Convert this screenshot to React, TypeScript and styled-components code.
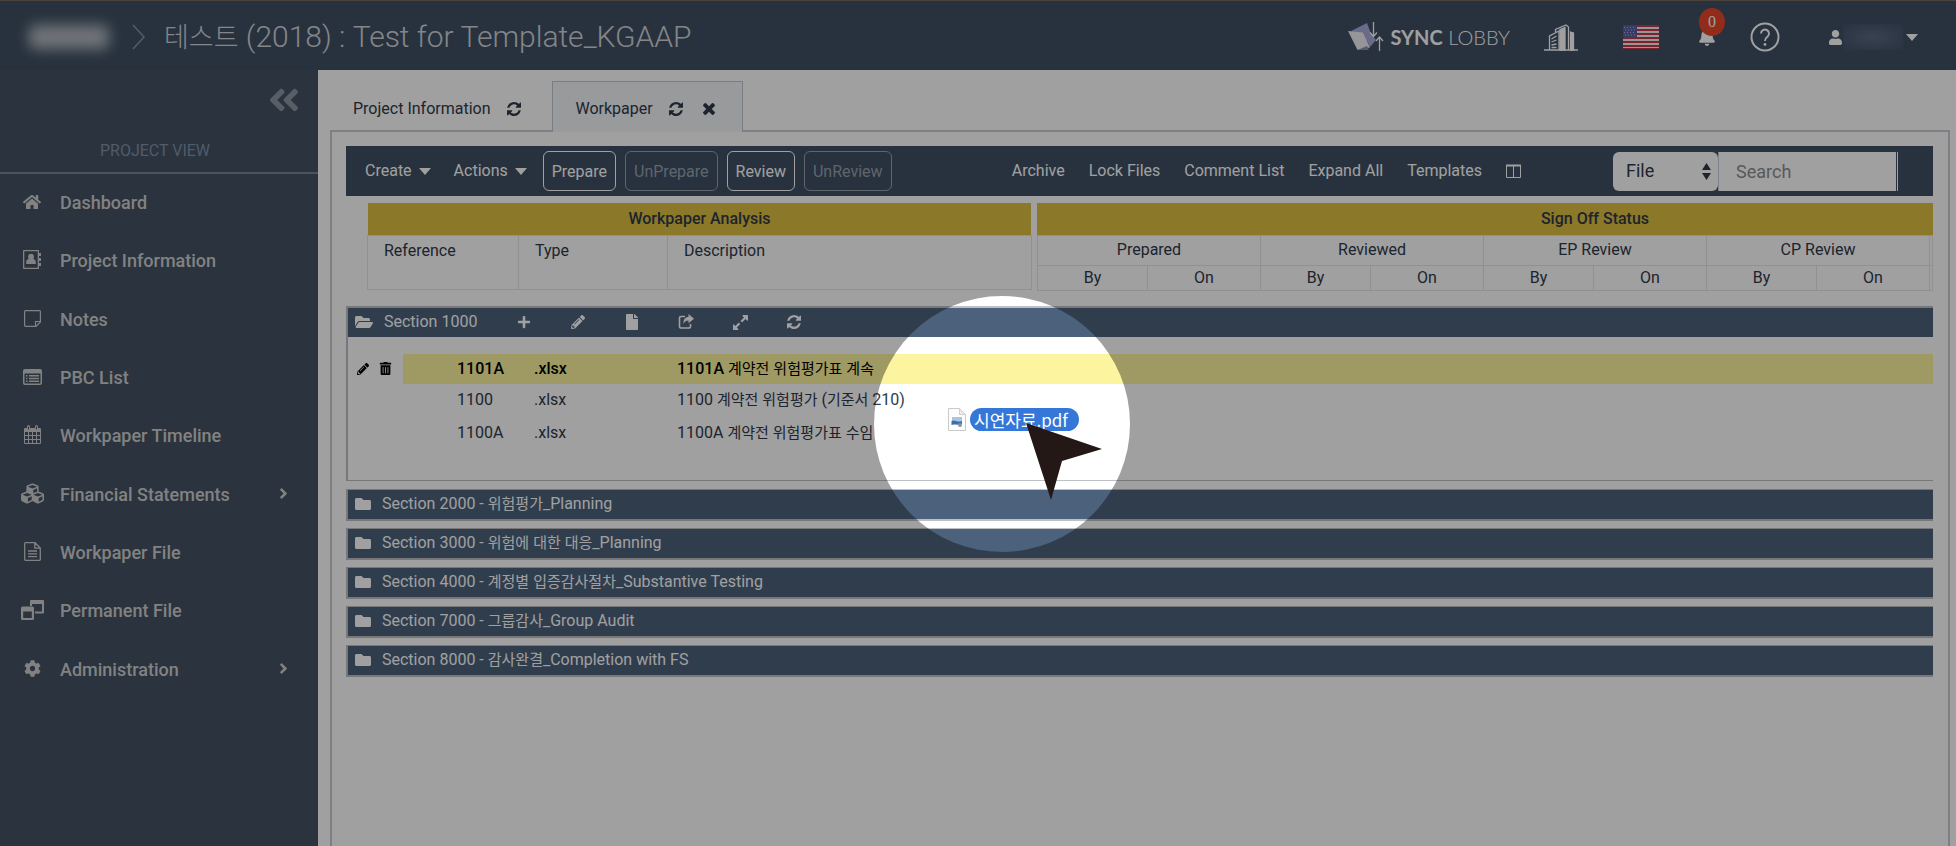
import React from 'react';
import styled, { createGlobalStyle, css } from 'styled-components';
import {
  FaHome, FaCubes, FaCog, FaAngleRight, FaAngleDoubleLeft, FaPencilAlt, FaTrashAlt,
  FaFolder, FaFolderOpen, FaPlus, FaFile, FaBell, FaUser,
} from 'react-icons/fa';

const GlobalStyle = createGlobalStyle`
  *, *::before, *::after { box-sizing: border-box; }
  body { margin: 0; font: 16px/24px Roboto, "Noto Sans CJK KR", sans-serif; color: #2f3a4a; background: #fff; }
  button, input, select { font: inherit; }
  button { border: 0; padding: 0; background: none; color: inherit; cursor: pointer; }
  a { color: inherit; text-decoration: none; }
  svg { display: block; flex: none; }
`;

const Page = styled.div`
  position: relative;
  display: flex;
  flex-direction: column;
  min-height: 100vh;
  overflow: hidden;
`;

/* ---------- header ---------- */

const Header = styled.header`
  display: flex;
  align-items: center;
  height: 70px;
  padding: 3px 36px 0 25px;
  background: #3f5063;
  border-top: 1px solid #76695f;
  color: #fff;
`;

const Company = styled.span`
  display: flex;
  align-items: center;
  justify-content: center;
  width: 88px;
  height: 30px;
`;

const CompanySmudge = styled.span`
  width: 80px;
  height: 24px;
  border-radius: 6px;
  background: #b4bac2;
  filter: blur(7px);
`;

const NameSmudge = styled.span`
  width: 60px;
  height: 26px;
  background: radial-gradient(ellipse at center, #5d6a80 0%, #4b5a70 60%, #42526a 100%);
  filter: blur(1px);
`;

const Title = styled.h1`
  flex: 1;
  margin: 0 0 0 18px;
  font-size: 30px;
  line-height: 40px;
  font-weight: 300;
  color: #d2d5da;
`;

const Hangul = styled.span<{ $size: number }>`
  font-size: ${(p) => p.$size}px;
  font-weight: ${(p) => (p.$size > 20 ? 300 : 400)};
`;

const Crumb = styled.svg`
  margin-left: 19px;
`;

const Tools = styled.div`
  display: flex;
  align-items: center;
`;

const Brand = styled.a`
  display: flex;
  align-items: center;
  gap: 6px;
  margin-right: 34px;
  font: 300 20px/28px Lato, sans-serif;
  white-space: nowrap;
  b { font-weight: 700; }
`;

const IconButton = styled.button<{ $gap: number }>`
  position: relative;
  margin-right: ${(p) => p.$gap}px;
`;

const Badge = styled.span`
  position: absolute;
  left: 1px;
  top: -20px;
  width: 26px;
  height: 28px;
  border-radius: 50%;
  background: #e8452a;
  font: 16px/28px "Liberation Serif", serif;
  text-align: center;
`;

const UserButton = styled.button`
  display: flex;
  align-items: center;
  svg:last-child { margin: 0 2px 0 3px; }
`;

/* ---------- body and sidebar ---------- */

const Body = styled.div`
  display: flex;
  flex: 1;
`;

const Sidebar = styled.aside`
  width: 318px;
  background: #435264;
  color: #cfcfcf;
`;

const Collapse = styled.button`
  display: block;
  margin: 12px 16px 0 auto;
  color: #8d96a2;
`;

const ViewLabel = styled.div`
  margin-top: 21px;
  padding: 0 8px 9px 0;
  border-bottom: 2px solid #76879a;
  text-align: center;
  color: #7f93ab;
`;

const Menu = styled.nav`
  display: grid;
  grid-auto-rows: 1fr;
  height: 525px;
`;

const MenuLink = styled.a`
  display: grid;
  grid-template-columns: 24px 1fr 20px;
  column-gap: 16px;
  align-items: center;
  padding: 0 25px 0 20px;
  font-size: 18px;
  font-weight: 500;
  svg { justify-self: center; margin-bottom: 3px; }
`;

/* ---------- tabs ---------- */

const Main = styled.main`
  flex: 1;
  display: flex;
  flex-direction: column;
  min-width: 0;
  padding: 11px 6px 0 12px;
`;

const Tabs = styled.div`
  display: flex;
  height: 49px;
`;

const Tab = styled.div<{ $active?: boolean }>`
  display: flex;
  align-items: center;
  gap: 16px;
  padding: 6px 31px 0 23px;
  ${(p) => p.$active && css`
    position: relative;
    margin-bottom: -2px;
    padding: 5px 27px 2px 23px;
    border: 1px solid #c3c8d2;
    border-bottom: 0;
    background: #f3f5f9;
  `}
`;

const CloseButton = styled.button`
  margin-left: 4px;
`;

const Panel = styled.section`
  flex: 1;
  padding: 14px 15px 0 14px;
  border: 2px solid #c9cbd3;
  border-bottom: 0;
`;

/* ---------- toolbar ---------- */

const Toolbar = styled.div`
  display: flex;
  align-items: center;
  justify-content: space-between;
  height: 50px;
  padding: 0 35px 0 19px;
  background: #3f5063;
  color: #fff;
`;

const Group = styled.div<{ $gap: number }>`
  display: flex;
  align-items: center;
  gap: ${(p) => p.$gap}px;
`;

const Drop = styled.button`
  display: flex;
  align-items: center;
  gap: 7px;
`;

const Outline = styled.button`
  height: 40px;
  padding: 1px 8px 0;
  border: 1px solid #fff;
  border-radius: 6px;
  &:disabled { color: #98a1ae; border-color: #98a1ae; cursor: default; }
`;

const Filter = styled.label`
  position: relative;
  display: block;
  height: 39px;
  color: #2f3a4a;
  svg { position: absolute; right: 7px; top: 11px; pointer-events: none; }
`;

const Select = styled.select`
  appearance: none;
  width: 105px;
  height: 39px;
  padding: 0 13px;
  border: 0;
  border-radius: 6px;
  background: #fff;
  color: inherit;
  font-size: 18px;
`;

const Search = styled.input`
  width: 180px;
  height: 39px;
  padding: 0 17px;
  border: 0;
  border-left: 1px solid #c6d0dc;
  border-right: 1px solid #fff;
  border-radius: 0;
  background: #fff;
  box-shadow: inset -1px 0 #3f5063;
  font-size: 18px;
  &::placeholder { color: #8e8e8e; opacity: 1; }
`;

/* ---------- column headings ---------- */

const Headings = styled.div`
  display: grid;
  grid-template-columns: 667fr 894fr;
  column-gap: 5px;
  margin: 7px 0 15px 21px;
`;

const HeadTable = styled.table<{ $align: string }>`
  width: 100%;
  height: 87px;
  border-collapse: collapse;
  table-layout: fixed;
  line-height: 22px;
  th { padding: 0; font-weight: 400; }
  thead th { height: 32px; background: #dec040; font-weight: 500; }
  tbody th {
    height: 25px;
    padding: ${(p) => (p.$align === 'left' ? '4px 16px' : '0')};
    border: 1px solid #e6e6ea;
    text-align: ${(p) => p.$align};
    vertical-align: ${(p) => (p.$align === 'left' ? 'top' : 'middle')};
  }
  tbody tr:first-child th { height: 30px; }
`;

/* ---------- sections ---------- */

const Section = styled.section<{ $open?: boolean }>`
  margin-bottom: ${(p) => (p.$open ? 8 : 7)}px;
  border: solid #bfc0c4;
  border-width: ${(p) => (p.$open ? '2px 0 1px 2px' : '1px 0 2px 2px')};
`;

const SectionBar = styled.div`
  display: flex;
  align-items: center;
  height: 29px;
  padding-left: 7px;
  background: #4c617c;
  color: #fff;
`;

const SectionName = styled.h2`
  margin: 0 0 0 11px;
  font-size: 16px;
  line-height: 24px;
  font-weight: 400;
`;

const SectionActions = styled.div`
  display: grid;
  grid-auto-flow: column;
  grid-auto-columns: 54px;
  align-items: center;
  justify-items: center;
  margin-left: 20px;
`;

const Files = styled.table`
  width: 100%;
  margin: 17px 0 30px;
  border-collapse: collapse;
  td { height: 33px; padding: 0; }
  td:nth-child(1) { width: 55px; }
  td:nth-child(2) { width: 131px; padding-left: 54px; }
  td:nth-child(3) { width: 143px; }
`;

const FileRow = styled.tr<{ $selected?: boolean }>`
  ${(p) => p.$selected && css`
    color: #000;
    font-weight: 500;
    td { height: 30px; }
    td + td { background: #fdf49f; }
  `}
`;

const RowActions = styled.div`
  display: flex;
  align-items: center;
  gap: 10px;
  padding-left: 9px;
`;

/* ---------- spotlight and dragged file ---------- */

const Spotlight = styled.div`
  position: absolute;
  z-index: 1;
  left: 874px;
  top: 296px;
  width: 256px;
  height: 256px;
  border-radius: 50%;
  box-shadow: 0 0 0 2000px rgba(0, 0, 0, 0.373);
  pointer-events: none;
`;

const Dragged = styled.div`
  position: absolute;
  z-index: 2;
  left: 948px;
  top: 408px;
  display: flex;
  align-items: center;
  gap: 4px;
  pointer-events: none;
`;

const FileName = styled.span`
  height: 23px;
  padding: 0 11px 0 4px;
  border-radius: 12px;
  background: #3477d9;
  color: #fff;
  font: 400 17px/23px "Noto Sans CJK KR", sans-serif;
`;

const Cursor = styled.svg`
  position: absolute;
  z-index: 3;
  left: 1026px;
  top: 423px;
  pointer-events: none;
`;

/* ---------- drawings ---------- */

const CaretIcon = () => (
  <svg width="12" height="7" viewBox="0 0 12 7" fill="currentColor"><path d="M0 0h12L6 7z" /></svg>
);

const RefreshIcon = () => (
  <svg width="14" height="14" viewBox="0 128 1536 1536" fill="currentColor">
    <path d="M1511 1056q0 5-1 7-64 268-268 434.500t-478 166.500q-146 0-282.500-55t-243.500-157l-129 129q-19 19-45 19t-45-19-19-45v-448q0-26 19-45t45-19h448q26 0 45 19t19 45-19 45l-137 137q71 66 161 102t187 36q134 0 250-65t186-179q11-17 53-117 8-23 30-23h192q13 0 22.500 9.500t9.500 22.500zm25-800v448q0 26-19 45t-45 19h-448q-26 0-45-19t-19-45 19-45l138-138q-148-137-349-137-134 0-250 65t-186 179q-11 17-53 117-8 23-30 23h-199q-13 0-22.500-9.500t-9.500-22.500v-7q65-268 270-434.500t480-166.500q146 0 284 55.500t245 156.500l130-129q19-19 45-19t45 19 19 45z" />
  </svg>
);

const CloseIcon = () => (
  <svg width="12" height="12" viewBox="110 366 1188 1188" fill="currentColor">
    <path d="M1298 1322q0 40-28 68l-136 136q-28 28-68 28t-68-28l-294-294-294 294q-28 28-68 28t-68-28l-136-136q-28-28-28-68t28-68l294-294-294-294q-28-28-28-68t28-68l136-136q28-28 68-28t68 28l294 294 294-294q28-28 68-28t68 28l136 136q28 28 28 68t-28 68l-294 294 294 294q28 28 28 68z" />
  </svg>
);

const ExpandIcon = () => (
  <svg width="15" height="15" viewBox="0 128 1536 1536" fill="currentColor">
    <path d="M736 1056q0 13-10 23l-332 332 144 144q19 19 19 45t-19 45-45 19h-448q-26 0-45-19t-19-45v-448q0-26 19-45t45-19 45 19l144 144 332-332q10-10 23-10t23 10l114 114q10 10 10 23zm800-864v448q0 26-19 45t-45 19-45-19l-144-144-332 332q-10 10-23 10t-23-10l-114-114q-10-10-10-23t10-23l332-332-144-144q-19-19-19-45t19-45 45-19h448q26 0 45 19t19 45z" />
  </svg>
);

const AddressIcon = () => (
  <svg width="18" height="19" viewBox="0 0 18 19" fill="currentColor">
    <path fillRule="evenodd" d="M1 0h15v19H1a1 1 0 0 1-1-1V1a1 1 0 0 1 1-1zm.3 1.300v16.400h13.400V1.300z" />
    <path d="M16 3h2v3h-2zM16 8h2v3h-2zM16 13h2v3h-2z" />
    <circle cx="8" cy="6.800" r="3" />
    <path d="M3.200 14v-2c0-2 1.300-3 3-3h3.600c1.700 0 3 1 3 3v2z" />
  </svg>
);

const NoteIcon = () => (
  <svg width="17" height="17" viewBox="0 0 17 17" fill="none" stroke="currentColor" strokeWidth="1.200">
    <path d="M1.500.600h14a.9.9 0 0 1 .9.900V12l-4.400 4.400H1.500a.9.9 0 0 1-.9-.9v-14a.9.9 0 0 1 .9-.9zM16.400 11.500h-4.900v4.900" />
  </svg>
);

const DocumentIcon = () => (
  <svg width="17" height="19" viewBox="0 0 17 19" fill="none" stroke="currentColor" strokeWidth="1.300">
    <path d="M1.500.700h9.500l5.300 5.300v11.500a.8.8 0 0 1-.8.8h-14a.8.8 0 0 1-.8-.8v-16a.8.8 0 0 1 .8-.8zM10.800.700v5.500h5.500M4 9h9M4 11.800h9M4 14.600h9" />
  </svg>
);

const WindowsIcon = () => (
  <svg width="23" height="20" viewBox="0 0 23 20" fill="currentColor">
    <path fillRule="evenodd" d="M10 0h12a1 1 0 0 1 1 1v11.500a1 1 0 0 1-1 1h-8v-2h7V4H11v2H9V1a1 1 0 0 1 1-1z" />
    <path fillRule="evenodd" d="M1.500 6.500h10A1.500 1.500 0 0 1 13 8v10.500a1.500 1.500 0 0 1-1.500 1.500h-10A1.500 1.500 0 0 1 0 18.500V8a1.500 1.500 0 0 1 1.500-1.500zM2.200 11.500V18h8.600v-6.500z" />
  </svg>
);

const ListIcon = () => (
  <svg width="19" height="16" viewBox="0 0 19 16" fill="currentColor">
    <path fillRule="evenodd" d="M2 0h15a2 2 0 0 1 2 2v12a2 2 0 0 1-2 2H2a2 2 0 0 1-2-2V2a2 2 0 0 1 2-2zM1.500 4.500V14l.5.500h15l.5-.5V4.500z" />
    <path d="M3 6h1.500v1.500H3zM6 6h10v1.500H6zM3 8.700h1.500v1.500H3zM6 8.700h10v1.500H6zM3 11.400h1.500v1.500H3zM6 11.400h10v1.500H6z" />
  </svg>
);

const CalendarIcon = () => (
  <svg width="17" height="19" viewBox="0 0 17 19" fill="none" stroke="currentColor">
    <path d="M.5 3.500h16v15H.5zM.5 6.500h16M.5 10.500h16M.5 14.500h16M4.500 7v11M8.500 7v11M12.500 7v11" />
    <path d="M1 4h15v2H1z" fill="currentColor" />
    <path d="M4.500 1.500v3M12.500 1.500v3" strokeWidth="3" strokeLinecap="round" />
    <path d="M4.500 1.500v3M12.500 1.500v3" stroke="#435264" />
  </svg>
);

const ColumnsIcon = () => (
  <svg width="15" height="15" viewBox="0 0 15 15" fill="none" stroke="currentColor">
    <path d="M.5 1.500h14v12H.5zM7.500 1v13" />
    <path d="M0 1.500h15" strokeWidth="2" />
  </svg>
);

const UpDownIcon = () => (
  <svg width="9" height="17" viewBox="0 0 9 17" fill="currentColor">
    <path d="M0 7 4.500 0 9 7zM0 10h9l-4.500 7z" />
  </svg>
);

const ShareIcon = () => (
  <svg width="16" height="16" viewBox="0 0 16 16" fill="none" stroke="currentColor" strokeWidth="1.600">
    <path d="M7 2.500H3A1.500 1.500 0 0 0 1.500 4v8.500A1.500 1.500 0 0 0 3 14h8a1.500 1.500 0 0 0 1.500-1.500V10" />
    <path d="M10.500 0 16 4.700l-5.500 4.600V6.500C8 6.500 6.500 7.500 5.500 10 5 5.500 7.500 3 10.500 3z" fill="currentColor" stroke="none" />
  </svg>
);

const BrandMark = () => (
  <svg width="36" height="30" viewBox="0 0 36 30">
    <path d="M3 9 19 1l6 16-3 4z" fill="#a9a9dc" />
    <path d="m0 9 15 1.500 7 15L9.500 28z" fill="#f0f0f4" />
    <path d="M9.500 28 19 24l2 4z" fill="#8c8ca8" />
    <path d="M15 10.500 22 25l6-7-4-5z" fill="#a9a9dc" />
    <path d="M25.500 0v14M22 10.500l3.500 4 3.500-4M31.500 29V15M28 19l3.500-4 3.500 4" fill="none" stroke="#fff" strokeWidth="1.300" />
  </svg>
);

const BuildingIcon = () => (
  <svg width="34" height="27" viewBox="0 0 34 27" fill="none" stroke="#fff" strokeWidth="1.300">
    <path d="M0 26h34" />
    <path d="M5.500 26V12L15 7v19M11.500 8V5.500L22 1l2.500 2v23" />
    <path d="M16 5.500 21 3.500V26h-5zM26.500 8l3 1v17h-3z" fill="#fff" />
    <path d="M7.500 15l5-3M7.500 18l5-2M7.500 21l5-1M7.500 23.500h5" />
  </svg>
);

const FlagIcon = () => (
  <svg width="36" height="24" viewBox="0 0 36 24">
    <path fill="#f2eeee" d="M0 0h36v24H0z" />
    {[0, 4, 8, 12, 16, 20].map((y) => <path key={y} fill="#c4384a" d={`M0 ${y}h36v2H0z`} />)}
    <path fill="#c4384a" d="M0 23h36v1H0z" />
    <path fill="#5a5fa5" d="M0 0h14v13H0z" />
    <path stroke="#b4b8de" strokeDasharray="1 2" d="M1 2.500h12M2 5h11M1 7.500h12M2 10h11" />
  </svg>
);

const HelpIcon = () => (
  <svg width="30" height="30" viewBox="0 0 30 30" fill="none" stroke="#fff" strokeWidth="2">
    <circle cx="15" cy="15" r="13.500" />
    <path d="M11 11.500a4 4 0 1 1 6.500 3.200c-1.600 1.200-2.500 1.800-2.500 4.300" />
    <circle cx="15" cy="22.500" r="1.400" fill="#fff" stroke="none" />
  </svg>
);

const PdfIcon = () => (
  <svg width="18" height="23" viewBox="0 0 18 23">
    <path d="M.5.500h11l6 6v16H.5z" fill="#fdfdfd" stroke="#c9c9c9" />
    <path d="M11.500.500v6h6z" fill="#ececec" stroke="#d0d0d0" />
    <path d="M4 9h10v7l-10 1z" fill="#a9c4e4" />
    <path d="M3.500 13c3-2 6 2 10.500 0v3c-4 2-7-1-10.500 1z" fill="#3d6ea8" />
    <circle cx="12" cy="17" r="2" fill="#8b9299" />
  </svg>
);

/* Sets Hangul runs slightly smaller than the Latin text around them. */
const Mixed = ({ text, size = 15 }: { text: string; size?: number }) => (
  <>
    {text.split(/([\uac00-\ud7a3]+)/).map((part, i) => (i % 2 ? <Hangul key={i} $size={size}>{part}</Hangul> : part))}
  </>
);

/* ---------- data ---------- */

const menu = [
  { label: 'Dashboard', icon: <FaHome size={18} /> },
  { label: 'Project Information', icon: <AddressIcon /> },
  { label: 'Notes', icon: <NoteIcon /> },
  { label: 'PBC List', icon: <ListIcon /> },
  { label: 'Workpaper Timeline', icon: <CalendarIcon /> },
  { label: 'Financial Statements', icon: <FaCubes size={23} />, more: true },
  { label: 'Workpaper File', icon: <DocumentIcon /> },
  { label: 'Permanent File', icon: <WindowsIcon /> },
  { label: 'Administration', icon: <FaCog size={17} />, more: true },
];

const actions = [
  { label: 'Add', icon: <FaPlus size={14} /> },
  { label: 'Edit', icon: <FaPencilAlt size={14} /> },
  { label: 'New file', icon: <FaFile size={16} /> },
  { label: 'Share', icon: <ShareIcon /> },
  { label: 'Expand', icon: <ExpandIcon /> },
  { label: 'Refresh', icon: <RefreshIcon /> },
];

const files = [
  { ref: '1101A', type: '.xlsx', name: '1101A 계약전 위험평가표 계속', selected: true },
  { ref: '1100', type: '.xlsx', name: '1100 계약전 위험평가 (기준서 210)' },
  { ref: '1100A', type: '.xlsx', name: '1100A 계약전 위험평가표 수임' },
];

const sections = [
  'Section 2000 - 위험평가_Planning',
  'Section 3000 - 위험에 대한 대응_Planning',
  'Section 4000 - 계정별 입증감사절차_Substantive Testing',
  'Section 7000 - 그룹감사_Group Audit',
  'Section 8000 - 감사완결_Completion with FS',
];

const stages = ['Prepared', 'Reviewed', 'EP Review', 'CP Review'];

export default function App() {
  return (
    <Page>
      <GlobalStyle />
      <Header>
        <Company><CompanySmudge /></Company>
        <Crumb width="14" height="26" viewBox="0 0 14 26" fill="none" stroke="#8793a1" strokeWidth="1.500">
          <path d="m1 1 11 12L1 25" />
        </Crumb>
        <Title><Mixed text="테스트 (2018) : Test for Template_KGAAP" size={27} /></Title>
        <Tools>
          <Brand href="#"><BrandMark /><span><b>SYNC</b> LOBBY</span></Brand>
          <IconButton $gap={45} aria-label="Companies"><BuildingIcon /></IconButton>
          <IconButton $gap={39} aria-label="Language"><FlagIcon /></IconButton>
          <IconButton $gap={34} aria-label="Notifications"><FaBell size={18} /><Badge>0</Badge></IconButton>
          <IconButton $gap={48} aria-label="Help"><HelpIcon /></IconButton>
          <UserButton aria-label="Account"><FaUser size={15} /><NameSmudge /><CaretIcon /></UserButton>
        </Tools>
      </Header>
      <Body>
        <Sidebar>
          <Collapse aria-label="Collapse sidebar"><FaAngleDoubleLeft size={36} /></Collapse>
          <ViewLabel>PROJECT VIEW</ViewLabel>
          <Menu>
            {menu.map((m) => (
              <MenuLink key={m.label} href="#">
                {m.icon}
                <span>{m.label}</span>
                {m.more && <FaAngleRight size={17} />}
              </MenuLink>
            ))}
          </Menu>
        </Sidebar>
        <Main>
          <Tabs>
            <Tab>
              <a href="#">Project Information</a>
              <button aria-label="Refresh"><RefreshIcon /></button>
            </Tab>
            <Tab $active>
              <a href="#">Workpaper</a>
              <button aria-label="Refresh"><RefreshIcon /></button>
              <CloseButton aria-label="Close"><CloseIcon /></CloseButton>
            </Tab>
          </Tabs>
          <Panel>
            <Toolbar>
              <Group $gap={16}>
                <Group $gap={23}>
                  <Drop>Create <CaretIcon /></Drop>
                  <Drop>Actions <CaretIcon /></Drop>
                </Group>
                <Group $gap={9}>
                  <Outline>Prepare</Outline>
                  <Outline disabled>UnPrepare</Outline>
                  <Outline>Review</Outline>
                  <Outline disabled>UnReview</Outline>
                </Group>
              </Group>
              <Group $gap={92}>
                <Group $gap={24}>
                  <button>Archive</button>
                  <button>Lock Files</button>
                  <button>Comment List</button>
                  <button>Expand All</button>
                  <button>Templates</button>
                  <button aria-label="Columns"><ColumnsIcon /></button>
                </Group>
                <Group $gap={0}>
                  <Filter>
                    <Select aria-label="Search in"><option>File</option></Select>
                    <UpDownIcon />
                  </Filter>
                  <Search aria-label="Search" placeholder="Search" />
                </Group>
              </Group>
            </Toolbar>
            <Headings>
              <HeadTable $align="left">
                <colgroup><col width="151" /><col width="149" /><col /></colgroup>
                <thead><tr><th colSpan={3}>Workpaper Analysis</th></tr></thead>
                <tbody><tr><th>Reference</th><th>Type</th><th>Description</th></tr></tbody>
              </HeadTable>
              <HeadTable $align="center">
                <colgroup>
                  {stages.map((s) => <React.Fragment key={s}><col width="110" /><col width="113" /></React.Fragment>)}
                  <col width="3" />
                </colgroup>
                <thead><tr><th colSpan={2} /><th colSpan={6}>Sign Off Status</th><th /></tr></thead>
                <tbody>
                  <tr>{stages.map((s) => <th key={s} colSpan={2}>{s}</th>)}<th /></tr>
                  <tr>{stages.map((s) => <React.Fragment key={s}><th>By</th><th>On</th></React.Fragment>)}<th /></tr>
                </tbody>
              </HeadTable>
            </Headings>
            <Section $open>
              <SectionBar>
                <FaFolderOpen size={18} />
                <SectionName>Section 1000</SectionName>
                <SectionActions>
                  {actions.map((a) => <button key={a.label} aria-label={a.label}>{a.icon}</button>)}
                </SectionActions>
              </SectionBar>
              <Files>
                <tbody>
                  {files.map((f) => (
                    <FileRow key={f.ref} $selected={f.selected}>
                      <td>
                        {f.selected && (
                          <RowActions>
                            <button aria-label="Edit"><FaPencilAlt size={12} /></button>
                            <button aria-label="Delete"><FaTrashAlt size={13} /></button>
                          </RowActions>
                        )}
                      </td>
                      <td>{f.ref}</td>
                      <td>{f.type}</td>
                      <td><Mixed text={f.name} /></td>
                    </FileRow>
                  ))}
                </tbody>
              </Files>
            </Section>
            {sections.map((s) => (
              <Section key={s}>
                <SectionBar>
                  <FaFolder size={16} />
                  <SectionName><Mixed text={s} /></SectionName>
                </SectionBar>
              </Section>
            ))}
          </Panel>
        </Main>
      </Body>
      <Spotlight />
      <Dragged><PdfIcon /><FileName>시연자료.pdf</FileName></Dragged>
      <Cursor width="76" height="78" viewBox="0 0 76 78"><path d="M0 0 76 26 36 38 25 77z" fill="#231815" /></Cursor>
    </Page>
  );
}
